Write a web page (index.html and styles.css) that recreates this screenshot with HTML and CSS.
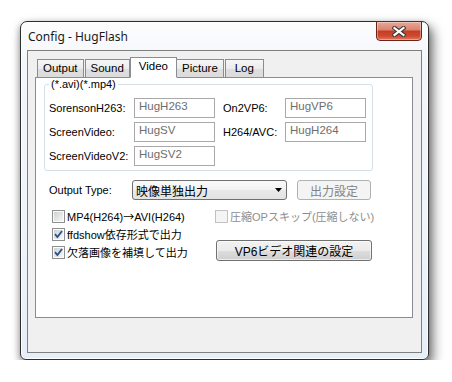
FILE: index.html
```html
<!DOCTYPE html>
<html lang="ja">

<head>
    <meta charset="UTF-8">
    <title>Config - HugFlash</title>
    <link rel="stylesheet" href="styles.css">
</head>

<body>
    <div class="window">
        <div class="titlebar">
            <span class="caption">Config - HugFlash</span>
            <button class="close" title="閉じる">
                <svg width="14" height="11" viewBox="0 0 14 11">
                    <path d="M2.5 2 L11.5 9 M11.5 2 L2.5 9" stroke="#3b3b3b" stroke-width="4.2" stroke-linecap="square" fill="none"/>
                    <path d="M2.5 2 L11.5 9 M11.5 2 L2.5 9" stroke="#ffffff" stroke-width="2.2" stroke-linecap="square" fill="none"/>
                </svg>
            </button>
        </div>
        <div class="client">
            <div class="tabs">
                <div class="tab">Output</div>
                <div class="tab">Sound</div>
                <div class="tab active">Video</div>
                <div class="tab">Picture</div>
                <div class="tab">Log</div>
            </div>
            <div class="panel">
                <fieldset class="group">
                    <legend>(*.avi)(*.mp4)</legend>
                    <div class="codec-grid">
                        <label>SorensonH263:</label>
                        <input class="field" value="HugH263" disabled>
                        <label class="right">On2VP6:</label>
                        <input class="field" value="HugVP6" disabled>

                        <label>ScreenVideo:</label>
                        <input class="field" value="HugSV" disabled>
                        <label class="right">H264/AVC:</label>
                        <input class="field" value="HugH264" disabled>

                        <label>ScreenVideoV2:</label>
                        <input class="field" value="HugSV2" disabled>
                    </div>
                </fieldset>

                <div class="type-row">
                    <span class="type-label">Output Type:</span>
                    <div class="combo">
                        <span>映像単独出力</span>
                        <svg width="7" height="4" viewBox="0 0 7 4">
                            <path d="M0 0 H7 L3.5 4 Z" fill="#000"/>
                        </svg>
                    </div>
                    <button class="btn" disabled>出力設定</button>
                </div>

                <div class="options">
                    <div class="check">
                        <span class="box"></span>
                        <span>MP4(H264)<span class="arrow">→</span>AVI(H264)</span>
                    </div>
                    <div class="check disabled">
                        <span class="box"></span>
                        <span>圧縮OPスキップ(圧縮しない)</span>
                    </div>
                    <div class="check">
                        <span class="box">
                            <svg width="9" height="9" viewBox="0 0 9 9">
                                <path d="M1 4.2 L3.4 7 L8 1" stroke="#2d4f86" stroke-width="1.8" fill="none"/>
                            </svg>
                        </span>
                        <span>ffdshow依存形式で出力</span>
                    </div>
                    <button class="btn vp6">VP6ビデオ関連の設定</button>
                    <div class="check">
                        <span class="box">
                            <svg width="9" height="9" viewBox="0 0 9 9">
                                <path d="M1 4.2 L3.4 7 L8 1" stroke="#2d4f86" stroke-width="1.8" fill="none"/>
                            </svg>
                        </span>
                        <span>欠落画像を補填して出力</span>
                    </div>
                </div>
            </div>
        </div>
    </div>
</body>

</html>
```

FILE: styles.css
```css
* {
    box-sizing: border-box;
}

body {
    margin: 0;
    padding: 21px 0 0 20px;
    background-color: #ffffff;
    font-family: "Liberation Sans", "Noto Sans CJK JP", sans-serif;
    font-size: 11px;
    color: #000000;
}

/* window frame */

.window {
    width: 409px;
    height: 339px;
    display: flex;
    flex-direction: column;
    padding: 0 6px 6px;
    border: 1px solid #2e2e2e;
    border-radius: 7px 7px 6px 6px;
    background: linear-gradient(#fdfdfe 0%, #f3f6fa 12%, #eef4fa 60%, #e6eef7 100%);
    box-shadow: inset 0 0 0 1px rgba(255, 255, 255, .85),
        4px 6px 12px rgba(0, 0, 0, .55),
        -1px 2px 6px rgba(0, 0, 0, .25);
}

.titlebar {
    height: 28px;
    display: flex;
    align-items: flex-start;
}

.caption {
    margin: 6px 0 0 1px;
    font-family: "Noto Sans", sans-serif;
    font-size: 12px;
    color: #1a1a1a;
    text-shadow: 0 0 6px #ffffff;
}

.close {
    margin: -1px 0 0 auto;
    width: 46px;
    height: 20px;
    padding: 0;
    display: flex;
    align-items: center;
    justify-content: center;
    border: 1px solid #6d2418;
    border-radius: 0 0 4px 4px;
    background: linear-gradient(#e8a899 0%, #dc8670 42%, #c53e25 52%, #cb4b31 78%, #e27a60 100%);
    box-shadow: inset 0 0 0 1px rgba(255, 255, 255, .35);
}

.client {
    flex: 1;
    padding: 6px 8px 0 7px;
    border: 1px solid #7f7f7f;
    background-color: #f0f0f0;
}

/* tabs */

.tabs {
    display: flex;
    align-items: flex-end;
    padding-left: 2px;
    margin-bottom: -1px;
    height: 21px;
    font-size: 11.5px;
}

.tab {
    height: 19px;
    min-width: 39px;
    padding: 0 5px;
    line-height: 17px;
    text-align: center;
    border: 1px solid #898c95;
    background: linear-gradient(#f6f6f6 0%, #ececec 50%, #dedede 51%, #dcdcdc 100%);
    margin-right: 1px;
}

.tab.active {
    position: relative;
    z-index: 1;
    height: 21px;
    line-height: 16px;
    padding: 0 8px;
    margin: 0 -1px 0 -1px;
    background: #ffffff;
    border-bottom-color: #ffffff;
}

.panel {
    height: 241px;
    padding: 0 8px;
    border: 1px solid #898c95;
    background-color: #ffffff;
}

/* codec group */

.group {
    margin: 0;
    width: 329px;
    padding: 8px 6px 4px 4px;
    border: 1px solid #d5dfe5;
    border-radius: 3px;
}

.group legend {
    padding: 0 2px;
    line-height: 12px;
}

.codec-grid {
    display: grid;
    grid-template-columns: 85px 81px 70px 81px;
    grid-auto-rows: 20px;
    row-gap: 4px;
    align-items: center;
}

.codec-grid label {
    white-space: nowrap;
}

.codec-grid .right {
    padding-left: 8px;
}

.field {
    width: 81px;
    height: 20px;
    padding: 0 4px 4px;
    border: 1px solid #a9a9a9;
    background-color: #ffffff;
    font: inherit;
    font-size: 11.5px;
    color: #6d6d6d;
}

/* output type */

.type-row {
    display: flex;
    align-items: center;
    margin-top: 9px;
    padding-left: 5px;
}

.type-label {
    width: 83px;
}

.combo {
    width: 155px;
    height: 20px;
    display: flex;
    align-items: center;
    justify-content: space-between;
    padding: 0 4px 0 3px;
    border: 1px solid #707070;
    border-radius: 3px;
    font-size: 12px;
    background: linear-gradient(#fafafa 0%, #f2f2f2 50%, #e9e9e9 51%, #e3e3e3 100%);
}

.btn {
    height: 20px;
    padding: 0;
    border: 1px solid #707070;
    border-radius: 3px;
    font: inherit;
    font-size: 12px;
    color: #000000;
    background: linear-gradient(#f2f2f2 0%, #ebebeb 50%, #dddddd 51%, #cfcfcf 100%);
    box-shadow: inset 0 0 0 1px rgba(255, 255, 255, .6);
}

.type-row .btn {
    width: 74px;
    margin-left: 10px;
}

.btn:disabled {
    border-color: #adb2b5;
    background: #f4f4f4;
    color: #838383;
    box-shadow: none;
}

/* check boxes */

.options {
    display: grid;
    grid-template-columns: 163px 156px;
    grid-auto-rows: 18px;
    margin-top: 7px;
    padding-left: 8px;
}

.check {
    display: flex;
    align-items: center;
    gap: 2px;
    white-space: nowrap;
}

.arrow {
    font-family: "Noto Sans CJK JP", sans-serif;
}

.box {
    flex: none;
    width: 13px;
    height: 13px;
    padding: 1px;
    border: 1px solid #8e8f8f;
    background: linear-gradient(135deg, #cfd1d4, #f7f7f7) content-box, #fbfbfb;
}

.box svg {
    display: block;
}

.check.disabled {
    color: #8d8d8d;
}

.check.disabled .box {
    border-color: #c2c2c2;
    background: #f4f4f4;
}

.vp6 {
    grid-column: 2;
    grid-row: 2 / span 2;
    align-self: end;
    height: 21px;
    width: 156px;
    margin-left: 1px;
}
```
